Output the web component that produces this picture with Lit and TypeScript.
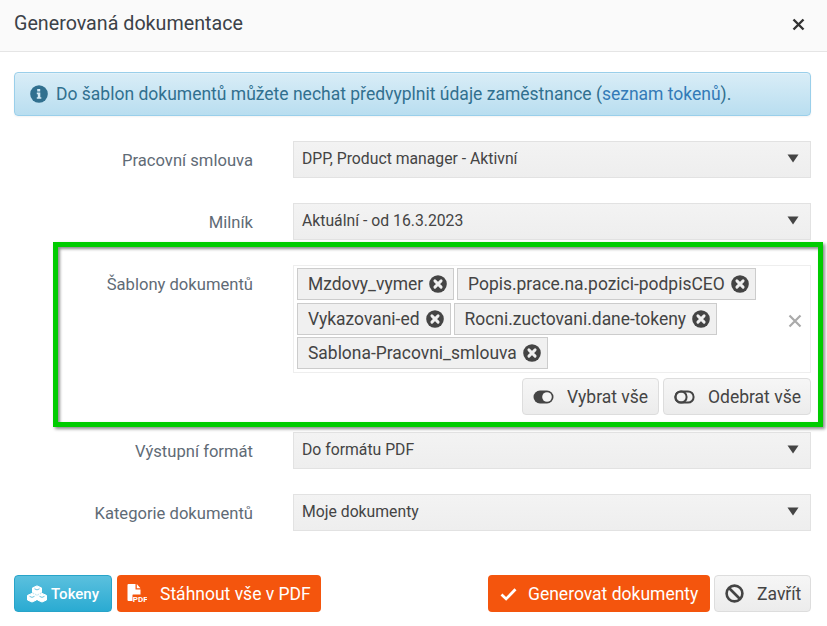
import { LitElement, html, css, svg } from "lit";
import { customElement } from "lit/decorators.js";

const timesCircle = html`<svg class="tx" viewBox="0 0 18 18"><circle cx="9" cy="9" r="8.8" fill="#444"/><path d="M5.9 5.9l6.2 6.2M12.1 5.9l-6.2 6.2" stroke="#f0f0f0" stroke-width="2.9" stroke-linecap="round" fill="none"/></svg>`;
const caret = html`<svg class="caret" viewBox="0 0 12 9"><path d="M0.5 0.5h11L6 8.5z" fill="#444"/></svg>`;
const cube = (x: number, y: number) => svg`<path transform="translate(${x} ${y})" d="M0 2.4L4.5 0.4L9 2.4V7L4.5 9L0 7Z" fill="#fff" stroke="#fff" stroke-width="1" stroke-linejoin="round"/><path transform="translate(${x} ${y})" d="M2 3.3L4.5 4.4L7 3.3" stroke="#45b4d8" stroke-width="0.8" fill="none"/>`;

@customElement("app-root")
export class AppRoot extends LitElement {
  static styles = css`
    :host { display: block; width: 827px; height: 626px; overflow: hidden; position: relative; background: #fff;
      font-family: Roboto, "Liberation Sans", sans-serif; color: #444; }
    * { box-sizing: border-box; }
    .head { height: 52px; background: #fafafa; border-bottom: 1px solid #e5e5e5; display: flex; align-items: center;
      justify-content: space-between; padding: 0 22px 3px 14px; }
    .title { font-size: 19.7px; color: #3c4248; padding-bottom: 1px; }
    .close { width: 13px; height: 13px; display: block; }
    .body { padding: 20px 16px 0 14px; }
    .alert { height: 44px; border: 1px solid #9acfea; border-radius: 4px; background: linear-gradient(#d9edf7, #b9def0);
      display: flex; align-items: center; padding: 0 15px; gap: 8px; font-size: 17.5px; color: #31708f; margin-bottom: 25px;
      box-shadow: 0 1px 0 rgba(255,255,255,.25) inset, 0 1px 2px rgba(0,0,0,.05); white-space: nowrap; }
    .alert svg { width: 18px; height: 18px; flex: none; }
    .alert a { color: #337ab7; }
    .row { display: grid; grid-template-columns: 239px 518px; column-gap: 40px; margin-bottom: 25px; }
    .label { font-size: 16.6px; color: #5f6b76; text-align: right; padding-top: 10px; line-height: 20px; }
    .select { height: 37px; background: linear-gradient(#f3f3f3, #eee); border: 1px solid #e2e2e2; display: flex;
      align-items: center; justify-content: space-between; padding: 0 11px 2px 8px; font-size: 15.75px; color: #444; }
    .caret { width: 12px; height: 9px; display: block; }
    .multi { height: 108px; border: 1px solid #eee; display: flex; align-items: flex-start; padding: 2px 3px; position: relative; }
    .tags { display: flex; flex-wrap: wrap; gap: 2.5px 3px; width: 480px; }
    .tag { height: 32px; display: flex; align-items: center; gap: 6px; border: 1px solid #ccc; background: #f0f0f0;
      padding: 0 6px 0 10px; font-size: 17.45px; color: #444; white-space: nowrap; }
    .tx { width: 18px; height: 18px; display: block; flex: none; }
    .clear { margin-left: auto; margin-right: 5px; margin-top: 46px; width: 14px; height: 14px; display: block; flex: none; }
    .allbtns { display: flex; justify-content: flex-end; gap: 4px; margin-top: 5px; margin-bottom: -8px; }
    .btn { height: 37px; display: flex; align-items: center; border-radius: 4px; font-size: 17.5px; white-space: nowrap; }
    .gray { background: linear-gradient(#f6f6f6, #ececec); border: 1px solid #ddd; color: #444; }
    .orange { background: #f4550d; color: #fff; }
    .blue { background: linear-gradient(#5bc0de, #2aabd2); border: 1px solid #28a4c9; color: #fff; font-size: 15px; font-weight: 500; }
    .v { width: 137px; padding-left: 10px; gap: 13px; }
    .o { width: 148px; padding-left: 10px; gap: 13px; }
    .toggle { width: 21px; height: 14px; display: block; flex: none; }
    .foot { position: absolute; left: 14px; right: 16px; top: 575px; display: flex; align-items: center; gap: 5px; }
    .spacer { flex: 1; }
    .tok { width: 98px; padding-left: 12px; gap: 4px; }
    .tok svg { width: 20px; height: 18px; flex: none; }
    .pdf { width: 204px; padding-left: 10px; gap: 13px; }
    .pdf .ficon { position: relative; width: 20px; height: 20px; flex: none; display: block; }
    .ficon svg { width: 20px; height: 20px; display: block; }
    .gen { width: 222px; padding-left: 12px; gap: 11px; margin-right: -1px; }
    .gen svg { width: 17px; height: 14px; flex: none; }
    .zav { width: 97px; padding-left: 10px; gap: 13px; }
    .zav svg { width: 19px; height: 19px; flex: none; }
    .highlight { position: absolute; left: 53px; top: 242px; width: 770px; height: 185px; border: 5px solid #00cc00;
      box-shadow: 2px 2px 3px rgba(0,0,0,.45), inset 2px 2px 3px rgba(0,0,0,.45); pointer-events: none; }
  `;

  private selectRow(label: string, value: string) {
    return html`<div class="row"><div class="label">${label}</div><div class="select"><span>${value}</span>${caret}</div></div>`;
  }

  render() {
    const tags = ["Mzdovy_vymer", "Popis.prace.na.pozici-podpisCEO", "Vykazovani-ed", "Rocni.zuctovani.dane-tokeny", "Sablona-Pracovni_smlouva"];
    return html`
      <div class="head">
        <div class="title">Generovaná dokumentace</div>
        <svg class="close" viewBox="0 0 13 13"><path d="M1.5 1.5l10 10M11.5 1.5l-10 10" stroke="#333" stroke-width="2.4" fill="none"/></svg>
      </div>
      <div class="body">
        <div class="alert">
          <svg viewBox="0 0 18 18"><circle cx="9" cy="9" r="8.8" fill="#31708f"/><path d="M7.2 4h3v2.4h-3zM6.8 7.6h3.5v4.6h1v1.6H6.8v-1.6h1v-3h-1z" fill="#d4eaf5"/></svg>
          <span>Do šablon dokumentů můžete nechat předvyplnit údaje zaměstnance (<a>seznam tokenů</a>).</span>
        </div>
        ${this.selectRow("Pracovní smlouva", "DPP, Product manager - Aktivní")}
        ${this.selectRow("Milník", "Aktuální - od 16.3.2023")}
        <div class="row">
          <div class="label">Šablony dokumentů</div>
          <div>
            <div class="multi">
              <div class="tags">${tags.map((t) => html`<div class="tag"><span>${t}</span>${timesCircle}</div>`)}</div>
              <svg class="clear" viewBox="0 0 14 14"><path d="M1.5 1.5l11 11M12.5 1.5l-11 11" stroke="#aaa" stroke-width="2.2" fill="none"/></svg>
            </div>
            <div class="allbtns">
              <div class="btn gray v">
                <svg class="toggle" viewBox="0 0 21 14"><rect x="0.5" y="0.5" width="20" height="13" rx="6.5" fill="#444"/><circle cx="14" cy="7" r="4.8" fill="#f4f4f4"/></svg>
                <span>Vybrat vše</span>
              </div>
              <div class="btn gray o">
                <svg class="toggle" viewBox="0 0 21 14"><rect x="1.4" y="1.4" width="18.2" height="11.2" rx="5.6" fill="none" stroke="#444" stroke-width="2"/><circle cx="7" cy="7" r="5.6" fill="none" stroke="#444" stroke-width="2"/></svg>
                <span>Odebrat vše</span>
              </div>
            </div>
          </div>
        </div>
        ${this.selectRow("Výstupní formát", "Do formátu PDF")}
        ${this.selectRow("Kategorie dokumentů", "Moje dokumenty")}
      </div>
      <div class="highlight"></div>
      <div class="foot">
        <div class="btn blue tok">
          <svg viewBox="0 0 20 18">${cube(5.5, 0.5)}${cube(0.5, 8)}${cube(10.5, 8)}</svg>
          <span>Tokeny</span>
        </div>
        <div class="btn orange pdf">
          <span class="ficon"><svg viewBox="0 0 20 20"><path d="M0.5 1a1 1 0 0 1 1-1h7v5.5h5V11H7v6H1.5a1 1 0 0 1-1-1zM9.8 0l3.7 4.2H9.8z" fill="#fff"/><rect x="5.5" y="10.5" width="14.5" height="8.5" rx="0.5" fill="#f4550d"/><text x="5.8" y="18" font-family="Roboto, sans-serif" font-size="8" font-weight="700" fill="#fff">PDF</text></svg></span>
          <span>Stáhnout vše v PDF</span>
        </div>
        <div class="spacer"></div>
        <div class="btn orange gen">
          <svg viewBox="0 0 17 14"><path d="M1.5 7.5l4.6 4.4L15.5 2.3" fill="none" stroke="#fff" stroke-width="2.8"/></svg>
          <span>Generovat dokumenty</span>
        </div>
        <div class="btn gray zav">
          <svg viewBox="0 0 19 19"><circle cx="9.5" cy="9.5" r="7.9" fill="none" stroke="#444" stroke-width="2.6"/><path d="M4 4l11 11" stroke="#444" stroke-width="2.6"/></svg>
          <span>Zavřít</span>
        </div>
      </div>
    `;
  }
}
